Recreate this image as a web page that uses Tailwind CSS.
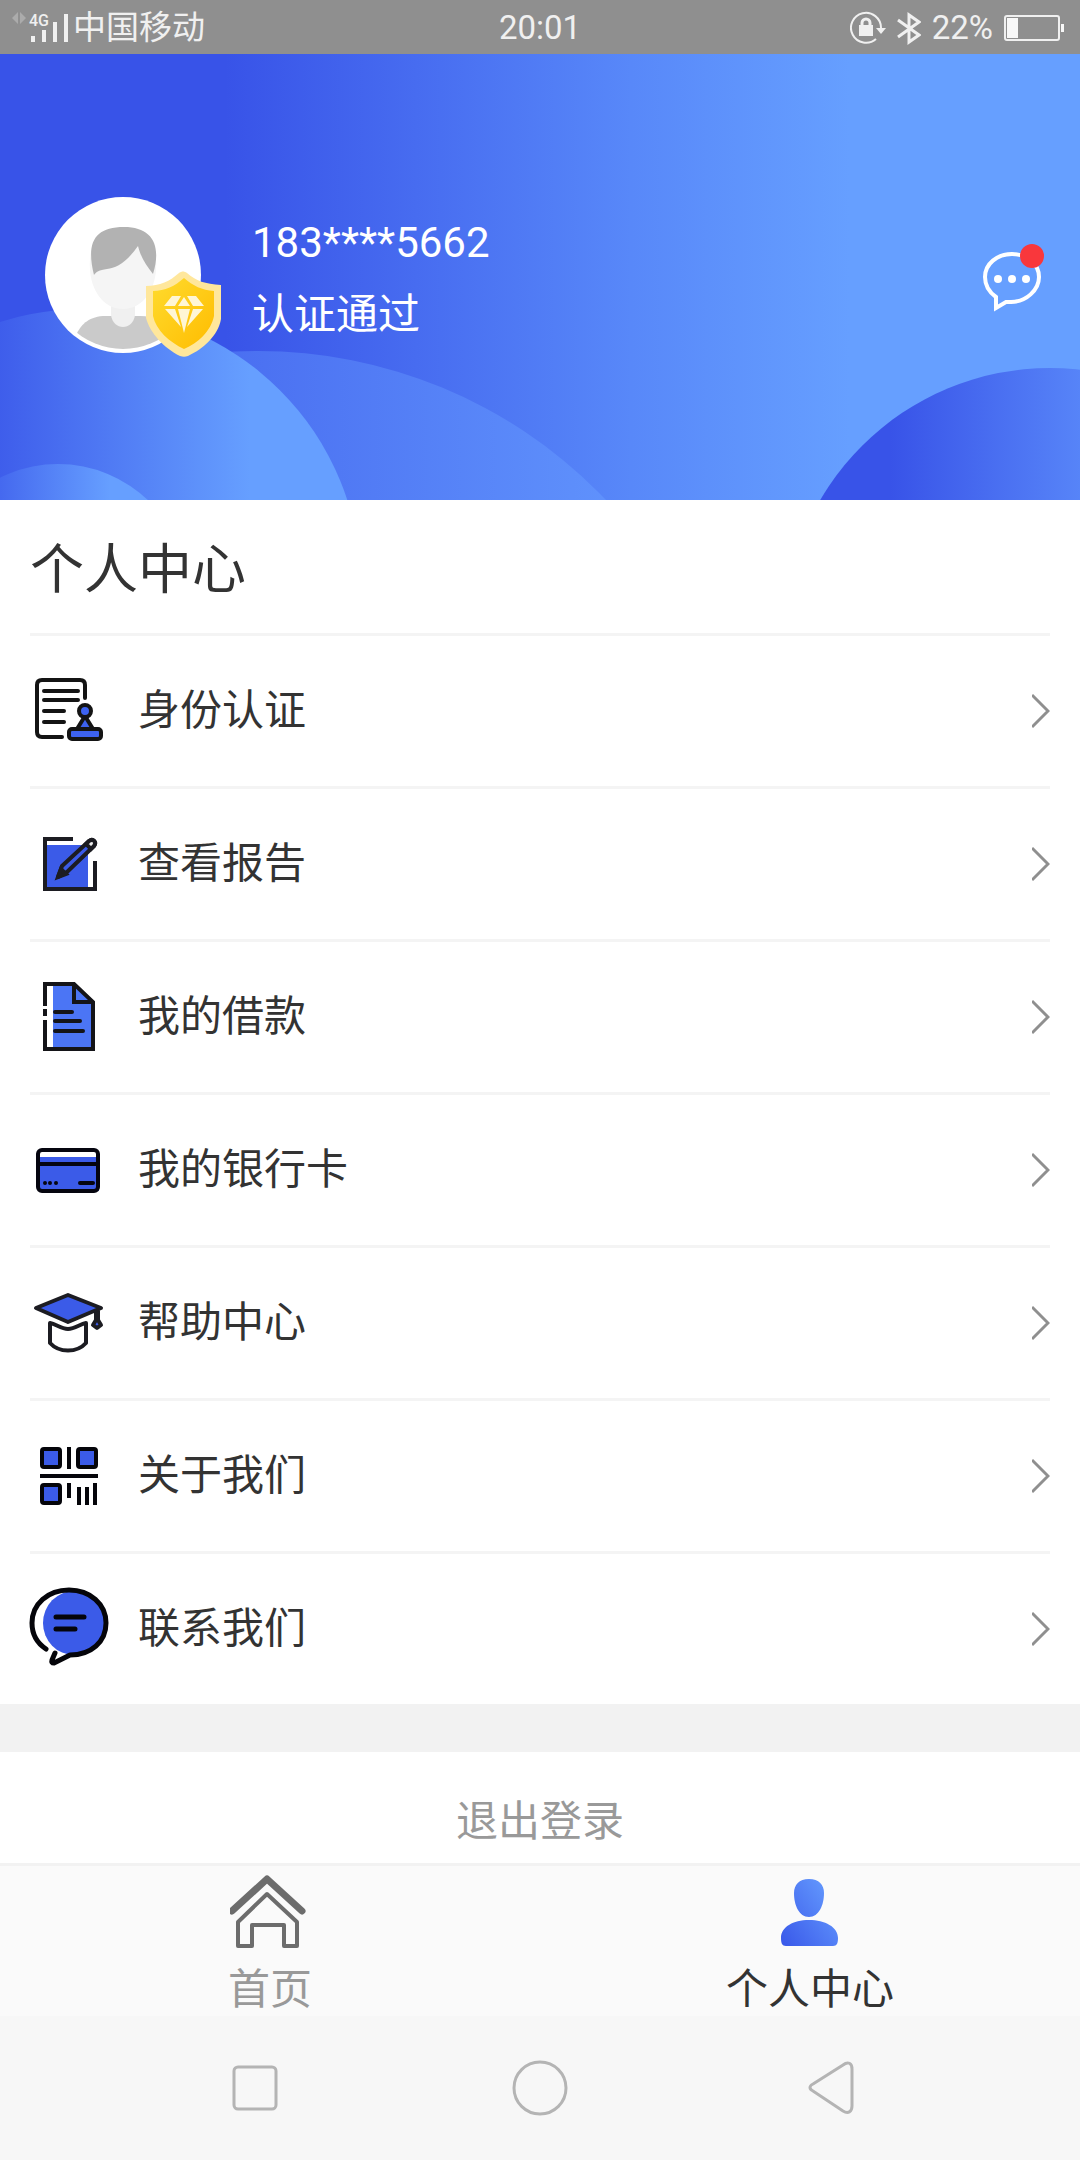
<!DOCTYPE html>
<html lang="zh-CN">
<head>
<meta charset="utf-8">
<meta name="viewport" content="width=device-width, initial-scale=1">
<title>个人中心</title>
<script src="https://cdn.jsdelivr.net/npm/@tailwindcss/browser@4"></script>
</head>
<body class="flex min-h-screen flex-col bg-white font-['Roboto','Noto_Sans_CJK_SC',sans-serif] text-[42px] leading-[60px] text-[#333333]">

<!-- Status bar -->
<div class="grid h-[54px] grid-cols-3 items-center bg-[#8f8f8f] text-[33px] leading-[56px] text-[#f0f0f0]">
  <div class="flex items-center gap-1 pl-3">
    <svg class="h-[54px] w-[57px]" viewBox="12 0 57 54" fill="#f0f0f0" aria-hidden="true">
      <path d="M18 11v12l-6-6zM20 11v12l6-6z" fill="#ababab"/>
      <text x="29" y="25" font-size="16" font-weight="500">4G</text>
      <path d="M31 35h4v6h-4zM42 29h4v12h-4zM53 21h4v20h-4zM64 13h4v28h-4z"/>
    </svg>
    <span>中国移动</span>
  </div>
  <div class="text-center">20:01</div>
  <div class="flex items-center justify-end gap-[11px] pr-4">
    <svg class="h-[54px] w-9" viewBox="848 0 36 54" fill="none" stroke="#f0f0f0" stroke-width="2" aria-hidden="true">
      <path d="M874 38a15 15 0 1 1 5-11"/>
      <path d="M874 27h10l-5 6z" fill="#f0f0f0" stroke="none"/>
      <path d="M857 24h14v11h-14z" fill="#f0f0f0" stroke="none"/>
      <path d="M860 25v-3a4 4 0 0 1 8 0v3" stroke-width="3"/>
    </svg>
    <svg class="h-[54px] w-6" viewBox="896 0 24 54" fill="none" stroke="#f0f0f0" stroke-width="3" aria-hidden="true">
      <path d="M897 19l21 15-10 7V14l10 7-21 15"/>
    </svg>
    <span class="leading-[54px]">22%</span>
    <svg class="h-[54px] w-[60px]" viewBox="1004 0 60 54" fill="none" aria-hidden="true">
      <rect x="1005" y="15" width="54" height="24" rx="2" stroke="#f0f0f0" stroke-width="2"/>
      <path d="M1007 17h11v20h-11zM1061 23h3v8h-3z" fill="#f8f8f8"/>
    </svg>
  </div>
</div>

<!-- Profile banner -->
<header class="relative flex h-[446px] items-center overflow-hidden bg-[#3853e8] pr-9 pl-[45px] text-white">
  <svg class="absolute inset-0 h-full w-full" viewBox="0 54 1080 446" preserveAspectRatio="none" aria-hidden="true">
    <defs>
      <linearGradient id="sky" gradientUnits="userSpaceOnUse" x1="225" x2="850" y1="0" y2="0"><stop stop-color="#3853e8"/><stop offset="0.650" stop-color="#5888f9"/><stop offset="1" stop-color="#669fff"/></linearGradient>
      <linearGradient id="left" gradientUnits="userSpaceOnUse" x1="-40" x2="250" y1="0" y2="0"><stop stop-color="#3853e8"/><stop offset="1" stop-color="#669fff"/></linearGradient>
      <linearGradient id="mid" gradientUnits="userSpaceOnUse" x1="230" x2="606" y1="0" y2="0"><stop stop-color="#4a6ff1"/><stop offset="1" stop-color="#5f91fc"/></linearGradient>
      <linearGradient id="low" gradientUnits="userSpaceOnUse" x1="-20" x2="110" y1="0" y2="0"><stop stop-color="#3f5fec"/><stop offset="1" stop-color="#669fff"/></linearGradient>
      <linearGradient id="right" gradientUnits="userSpaceOnUse" x1="890" x2="1130" y1="0" y2="0"><stop stop-color="#3853e8"/><stop offset="1" stop-color="#5f91fc"/></linearGradient>
    </defs>
    <path d="M0 54h1080v446H0z" fill="url(#sky)"/>
    <circle cx="258" cy="832" r="481" fill="url(#mid)"/>
    <circle cx="84" cy="586" r="277" fill="url(#left)"/>
    <circle cx="58" cy="594" r="130" fill="url(#low)"/>
    <circle cx="1050" cy="634" r="266" fill="url(#right)"/>
  </svg>
  <svg class="relative h-40 w-[177px] shrink-0" viewBox="45 197 177 160" role="img" aria-label="头像">
    <defs>
      <clipPath id="face"><circle cx="123" cy="275" r="74"/></clipPath>
      <linearGradient id="gold" x2="1" y2="1"><stop stop-color="#ffdb2e"/><stop offset="1" stop-color="#ffbc00"/></linearGradient>
    </defs>
    <circle cx="123" cy="275" r="78" fill="#fff"/>
    <g clip-path="url(#face)">
      <path d="M77 333c5-9 12-17 29-17h34c15 0 24 8 29 17v20H77z" fill="#cacaca"/>
      <path d="M111 300h24v15c-2 16-22 16-24 0z" fill="#f0f0f0"/>
      <path d="M90 270c-2-28 10-40 33-40s35 12 33 40c-1 18-12 39-33 39s-32-21-33-39z" fill="#f5f5f5"/>
      <path d="M94 275c-8-32 0-48 30-48 28 0 38 18 29 47-7-9-12-16-15-28-12 17-22 22-31 23-8 1-11 3-13 6z" fill="#b2b2b2"/>
    </g>
    <path d="M179 273c3-2 5-2 8 0 9 8 18 11 34 12v34c-3 17-18 30-33 37-3 1-5 1-8 0-16-8-30-23-34-38v-32c14 0 24-5 33-13z" fill="#ffe79c"/>
    <path d="M184 278c9 8 18 12 30 13v25c-3 15-16 27-30 33-15-7-28-19-31-33v-25c12 0 22-5 31-13z" fill="url(#gold)"/>
    <path d="M172 296h9l-6 10h-11zM187 296h9l8 10h-11zM184 297l6 9h-12zM165 309h10l6 18zM178 309h12l-6 24zM193 309h10l-16 18z" fill="#fff6d5"/>
  </svg>
  <div class="relative ml-[30px] grow pt-1 leading-[72px]">
    <p>183****5662</p>
    <p>认证通过</p>
  </div>
  <button type="button" aria-label="消息" class="relative">
    <svg class="h-[70px] w-[62px]" viewBox="982 241 62 70" aria-hidden="true">
      <path d="M996 296c-7-5-11-12-11-20 0-13 12-23 27-23s27 10 27 23-13 25-28 25h-5l-10 6z" fill="none" stroke="#fff" stroke-width="4"/>
      <circle cx="998" cy="278" r="4" fill="#fff"/><circle cx="1012" cy="278" r="4" fill="#fff"/><circle cx="1026" cy="278" r="4" fill="#fff"/>
      <circle cx="1032" cy="255" r="12" fill="#f9373c"/>
    </svg>
  </button>
</header>

<!-- Menu -->
<main class="flex grow flex-col bg-[#f2f2f2]">
  <section class="bg-white px-[30px]">
    <h1 class="border-b-3 border-[#f4f4f4] pt-9 pb-7 text-[54px] leading-[69px]">个人中心</h1>
    <ul class="divide-y-3 divide-[#f4f4f4]">
      <li><a href="#identity" class="flex h-[150px] items-center">
        <svg class="mr-[30px] size-[78px]" viewBox="0 0 78 78" fill="none" stroke="#141414" stroke-width="4" stroke-linecap="round" stroke-linejoin="round" aria-hidden="true">
          <path d="M55 26V13q0-5-5-5H12q-5 0-5 5v47q0 5 5 5h20M14 19h34M14 28h34M14 39h20M14 50h20"/>
          <path d="M55 44l-8 13h16z" fill="#3d62f0"/><circle cx="55" cy="39" r="6" fill="#3d62f0"/><rect x="39" y="57" width="32" height="10" rx="3" fill="#3d62f0"/>
        </svg>
        <span class="grow">身份认证</span>
        <svg class="h-9 w-[18px]" viewBox="1 1 18 36" fill="none" stroke="#8f8f8f" stroke-width="3" aria-hidden="true"><path d="M1 3l16 16L1 35"/></svg>
      </a></li>
      <li><a href="#report" class="flex h-[150px] items-center">
        <svg class="mr-[30px] size-[78px]" viewBox="0 0 78 78" fill="none" stroke="#1c1c22" stroke-width="4" aria-hidden="true">
          <path d="M16 20h42v42H16z" fill="#3b5be8" stroke="none"/>
          <path d="M43 14H15v50h50V36"/>
          <path d="M28 52l4-11 27-25c4-3 8 1 5 5L37 47z" fill="#3b5be8" stroke-linejoin="round"/>
          <path d="M59 16c4-3 8 1 5 5l-3 3-5-5z" fill="#eee"/>
          <path d="M28 52l3-8 5 5z" fill="#1c1c22"/>
        </svg>
        <span class="grow">查看报告</span>
        <svg class="h-9 w-[18px]" viewBox="1 1 18 36" fill="none" stroke="#8f8f8f" stroke-width="3" aria-hidden="true"><path d="M1 3l16 16L1 35"/></svg>
      </a></li>
      <li><a href="#loans" class="flex h-[150px] items-center">
        <svg class="mr-[30px] size-[78px]" viewBox="0 0 78 78" fill="none" stroke="#141418" stroke-width="4" aria-hidden="true">
          <path d="M23 6h21l19 18v47H23z" fill="#4b75f5" stroke="none"/>
          <path d="M15 28V6h29l19 18v47H15V42M15 31v7"/>
          <path d="M44 7v17h18"/>
          <path d="M25 34h17M25 43h25M25 53h28" stroke-linecap="round"/>
        </svg>
        <span class="grow">我的借款</span>
        <svg class="h-9 w-[18px]" viewBox="1 1 18 36" fill="none" stroke="#8f8f8f" stroke-width="3" aria-hidden="true"><path d="M1 3l16 16L1 35"/></svg>
      </a></li>
      <li><a href="#cards" class="flex h-[150px] items-center">
        <svg class="mr-[30px] size-[78px]" viewBox="0 0 78 78" fill="none" stroke="#05050f" stroke-width="4" aria-hidden="true">
          <path d="M9 26h60v34H9z" fill="#3b5be8" stroke="none"/>
          <rect x="8" y="19" width="60" height="41" rx="4"/>
          <path d="M9 33h60"/>
          <path d="M50 52h13M15 52h0M20 52h0M26 52h0" stroke-linecap="round"/>
        </svg>
        <span class="grow">我的银行卡</span>
        <svg class="h-9 w-[18px]" viewBox="1 1 18 36" fill="none" stroke="#8f8f8f" stroke-width="3" aria-hidden="true"><path d="M1 3l16 16L1 35"/></svg>
      </a></li>
      <li><a href="#help" class="flex h-[150px] items-center">
        <svg class="mr-[30px] size-[78px]" viewBox="0 0 78 78" fill="none" stroke="#1c1c22" stroke-width="4" stroke-linejoin="round" aria-hidden="true">
          <path d="M20 39v20c9 10 27 10 36 0V39c-6 1-11 6-18 6s-12-5-18-6z"/>
          <path d="M66 27v9l-3 5 4 3 4-3-3-5v-9z" fill="#3b5be8"/>
          <path d="M6 24l32-13 33 13-33 14z" fill="#3b5be8"/>
        </svg>
        <span class="grow">帮助中心</span>
        <svg class="h-9 w-[18px]" viewBox="1 1 18 36" fill="none" stroke="#8f8f8f" stroke-width="3" aria-hidden="true"><path d="M1 3l16 16L1 35"/></svg>
      </a></li>
      <li><a href="#about" class="flex h-[150px] items-center">
        <svg class="mr-[30px] size-[78px]" viewBox="0 0 78 78" fill="none" stroke="#05050a" stroke-width="4" aria-hidden="true">
          <g fill="#3b5be8"><rect x="12" y="12" width="18" height="18" rx="2"/><rect x="48" y="12" width="18" height="18" rx="2"/><rect x="12" y="48" width="18" height="18" rx="2"/></g>
          <path d="M39 10v22M10 39h58M39 46v15M49 50v18M57 50v18M65 46v22"/>
        </svg>
        <span class="grow">关于我们</span>
        <svg class="h-9 w-[18px]" viewBox="1 1 18 36" fill="none" stroke="#8f8f8f" stroke-width="3" aria-hidden="true"><path d="M1 3l16 16L1 35"/></svg>
      </a></li>
      <li><a href="#contact" class="flex h-[150px] items-center">
        <svg class="mr-[30px] size-[78px] overflow-visible" viewBox="0 0 78 78" fill="none" stroke="#05050a" stroke-width="5" stroke-linecap="round" stroke-linejoin="round" aria-hidden="true">
          <ellipse cx="44" cy="33" rx="31" ry="32" fill="#3b5be8" stroke="none"/>
          <path d="M16 59C7 53 2 44 2 33 2 14 18 0 39 0s37 14 37 33-15 32-36 32L24 73q-3 0-2-3l3-7"/>
          <path d="M26 27h28M26 39h19"/>
        </svg>
        <span class="grow">联系我们</span>
        <svg class="h-9 w-[18px]" viewBox="1 1 18 36" fill="none" stroke="#8f8f8f" stroke-width="3" aria-hidden="true"><path d="M1 3l16 16L1 35"/></svg>
      </a></li>
    </ul>
  </section>
  <button type="button" class="mt-12 grow bg-white pt-10 pb-[11px] text-[#999999]">退出登录</button>
</main>

<!-- Tab bar -->
<nav class="grid h-[153px] grid-cols-2 border-t-3 border-[#f2f2f2] bg-[#fafafa]">
  <a href="#home" class="flex flex-col items-center gap-[6px] pt-2 text-[#999999]">
    <svg class="h-20 w-20" viewBox="230 1874 80 80" fill="none" stroke="#6c6c6c" stroke-linejoin="round" aria-hidden="true">
      <path d="M232 1911l35-32 35 32" stroke-width="7" stroke-linecap="round"/>
      <path d="M267 1894l-29 28v24h14v-21h32v21h13v-24z" stroke-width="4"/>
    </svg>
    <span>首页</span>
  </a>
  <a href="#me" aria-current="page" class="flex flex-col items-center gap-[6px] pt-2">
    <svg class="h-20 w-20" viewBox="770 1874 80 80" fill="url(#person)" aria-hidden="true">
      <defs><linearGradient id="person" gradientUnits="userSpaceOnUse" x1="782" x2="838" y1="1940" y2="1900"><stop stop-color="#3b5bea"/><stop offset="1" stop-color="#6297fd"/></linearGradient></defs>
      <path d="M809 1879c10 0 15 6 15 14 0 12-5 24-15 24s-15-12-15-24c0-8 5-14 15-14zM809 1920c16 0 29 7 29 18 0 5-1 8-5 8h-47c-4 0-5-3-5-8 0-11 12-18 28-18z"/>
    </svg>
    <span>个人中心</span>
  </a>
</nav>

<!-- System navigation -->
<div class="grid h-36 grid-cols-3 place-items-center bg-[#f7f7f7] px-28">
  <button type="button" aria-label="最近任务"><svg class="size-[60px]" viewBox="225 2058 60 60" fill="none" stroke="#b4b4b4" stroke-width="3"><rect x="234" y="2067" width="42" height="42" rx="4"/></svg></button>
  <button type="button" aria-label="主屏幕"><svg class="size-[60px]" viewBox="510 2058 60 60" fill="none" stroke="#b4b4b4" stroke-width="3"><circle cx="540" cy="2088" r="26"/></svg></button>
  <button type="button" aria-label="返回"><svg class="size-[60px]" viewBox="794 2058 60 60" fill="none" stroke="#b4b4b4" stroke-width="3"><path d="M812 2084l30-19c5-4 9-2 9 4v37c0 6-4 8-9 5l-30-20c-4-2-4-5 0-7z"/></svg></button>
</div>
</body>
</html>
